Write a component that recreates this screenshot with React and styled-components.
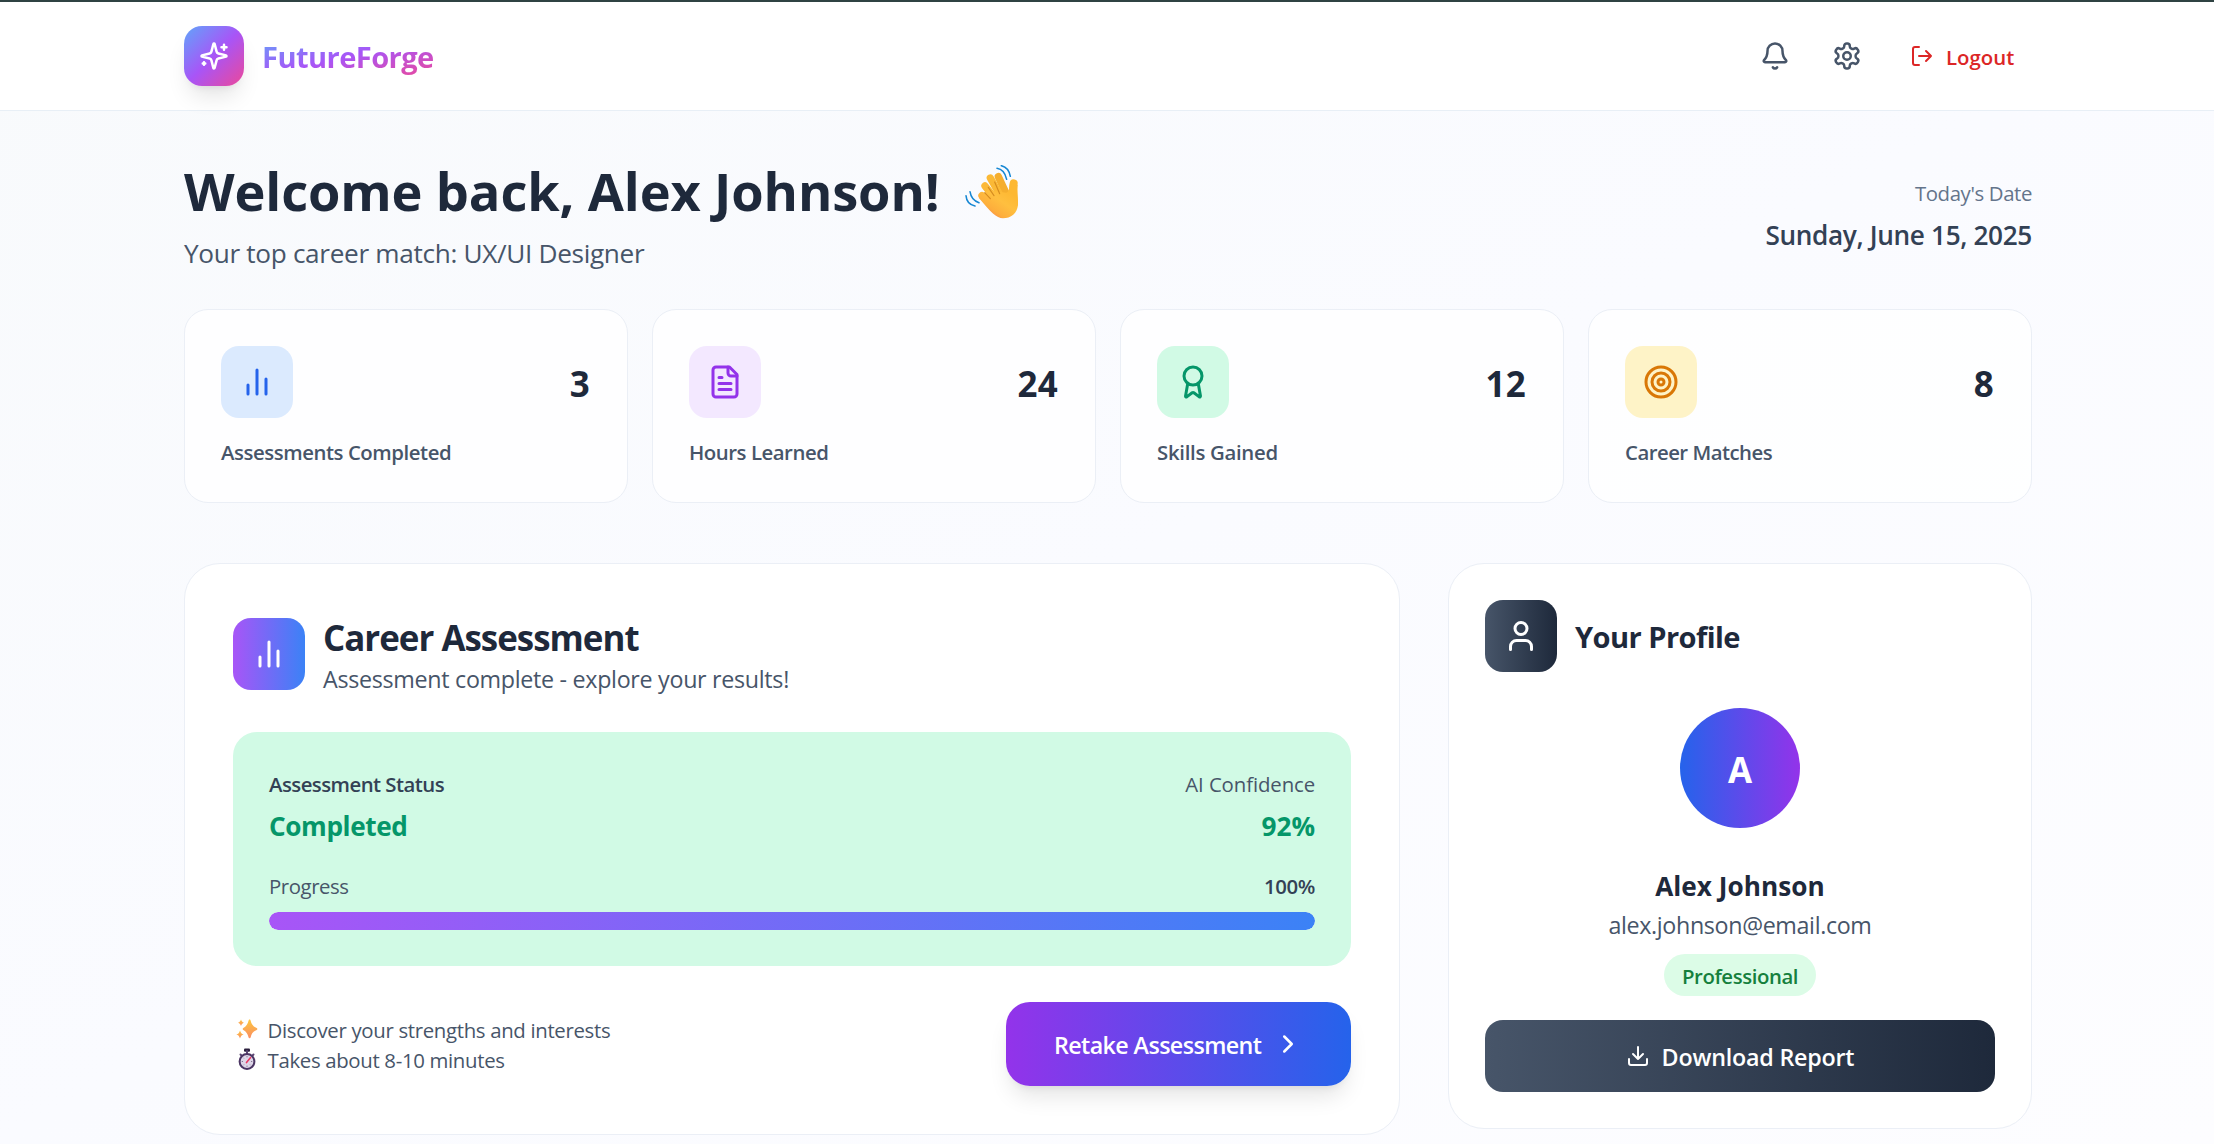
import React from "react";
import styled, { createGlobalStyle, css } from "styled-components";
import { Bell, Award, Target, ChevronRight } from "lucide-react";

const GlobalStyle = createGlobalStyle`
  *, *::before, *::after { box-sizing: border-box; }
  html, body { margin: 0; padding: 0; overflow: hidden; }
  body {
    font-family: "Open Sans", "Noto Sans", sans-serif;
    color: #1e293b;
  }
  h1, h2, h3, p { margin: 0; }
  button { font-family: inherit; border: 0; background: none; cursor: pointer; }
  svg { display: block; flex: none; }
`;

/* Type scale: font size, line box and a small optical drop within the line. */
const type = (size, line, drop = 2) => css`
  font-size: ${size * 0.97}px;
  line-height: ${line - drop}px;
  padding-top: ${drop}px;
  letter-spacing: ${(p) => p.$track || 0}px;
  white-space: nowrap;
`;

const Page = styled.div`
  height: 1144px;
  overflow: hidden;
  border-top: 2px solid #2f4343;
  background: linear-gradient(to bottom right, #f8fafc, #fafbff 50%, #fdfdff);
`;

const Header = styled.header`
  height: 109px;
  background: rgba(255, 255, 255, 0.92);
  border-bottom: 1px solid #e8eff6;
`;

const HeaderInner = styled.div`
  width: 1848px;
  height: 108px;
  margin-left: 184px;
  display: flex;
  align-items: center;
  justify-content: space-between;
`;

const Brand = styled.div`
  display: flex;
  align-items: center;
  gap: 18px;
`;

const LogoTile = styled.div`
  width: 60px;
  height: 60px;
  border-radius: 18px;
  display: grid;
  place-items: center;
  color: #fff;
  background: linear-gradient(to bottom right, #60a5fa, #a855f7, #ec4899);
  box-shadow: 0 15px 22.5px -4.5px rgba(0, 0, 0, 0.1), 0 6px 9px -6px rgba(0, 0, 0, 0.1);
`;

const BrandName = styled.span`
  ${type(30, 42, 3)}
  font-weight: 700;
  color: transparent;
  background: linear-gradient(to bottom right, #60a5fa, #a855f7, #ec4899);
  background-clip: text;
  -webkit-background-clip: text;
`;

const HeaderActions = styled.div`
  display: flex;
  align-items: center;
  gap: 18px;
`;

const IconButton = styled.button`
  padding: 12px;
  color: #475569;
`;

const LogoutButton = styled.button`
  display: flex;
  align-items: center;
  gap: 12px;
  width: 140px;
  padding: 12px 18px;
  color: #dc2626;
`;

const LogoutLabel = styled.span`
  ${type(21, 30)}
  font-weight: 570;
`;

const Main = styled.main`
  width: 1848px;
  margin-left: 184px;
  padding-top: 48px;
`;

const Hero = styled.section`
  display: flex;
  align-items: center;
  justify-content: space-between;
  margin-bottom: 36px;
`;

const Greeting = styled.div`
  display: flex;
  flex-direction: column;
  gap: 12px;
`;

const HeroTitle = styled.h1`
  ${type(54, 60, 4)}
  font-weight: 700;
  display: flex;
  gap: 25px;
`;

const WaveSlot = styled.span`
  width: 54px;
  height: 54px;
  margin-top: 2px;
`;

const HeroSubtitle = styled.p`
  ${type(27, 42)}
  color: #475569;
`;

const DateBlock = styled.div`
  display: flex;
  flex-direction: column;
  align-items: flex-end;
  gap: 6px;
`;

const DateCaption = styled.p`
  ${type(21, 30)}
  color: #64748b;
`;

const DateValue = styled.p`
  ${type(27, 42)}
  font-weight: 600;
  color: #334155;
`;

const StatGrid = styled.section`
  display: grid;
  grid-template-columns: repeat(4, 1fr);
  gap: 24px;
  margin-bottom: 60px;
`;

const surface = css`
  background: rgba(255, 255, 255, 0.8);
  border: 1px solid #ebeff6;
`;

const StatCard = styled.article`
  ${surface}
  height: 194px;
  border-radius: 24px;
  padding: 36px;
`;

const StatTop = styled.div`
  display: flex;
  align-items: center;
  justify-content: space-between;
  margin-bottom: 18px;
`;

const IconTile = styled.div`
  width: 72px;
  height: 72px;
  border-radius: 18px;
  display: grid;
  place-items: center;
  flex: none;
  color: ${(p) => p.$ink};
  background: ${(p) => p.$fill};
`;

const StatValue = styled.span`
  ${type(36, 48, 4)}
  font-weight: 700;
  margin-right: 1px;
`;

const StatLabel = styled.p`
  ${type(21, 30, 3)}
  font-weight: 560;
  color: #475569;
`;

const Columns = styled.section`
  display: grid;
  grid-template-columns: 1216px 584px;
  gap: 48px;
  align-items: start;
`;

const Panel = styled.article`
  ${surface}
  background: rgba(255, 255, 255, 0.92);
  border-radius: 36px;
  padding: ${(p) => p.$pad}px;
`;

const PanelHead = styled.header`
  display: flex;
  align-items: center;
  gap: 18px;
  margin-bottom: 36px;
`;

const PanelTitle = styled.h2`
  ${type(36, 48, 4)}
  font-weight: 700;
`;

const PanelSubtitle = styled.p`
  ${type(24, 36)}
  color: #475569;
`;

const ProfileTitle = styled.h3`
  ${type(30, 42, 3)}
  font-weight: 700;
`;

const StatusBox = styled.div`
  display: flex;
  flex-direction: column;
  height: 234px;
  padding: 36px;
  border-radius: 24px;
  background: #d1fae5;
  margin-bottom: 36px;
`;

const Split = styled.div`
  display: flex;
  justify-content: space-between;
  margin-bottom: ${(p) => p.$gap}px;
`;

const SmallText = styled.span`
  ${type(21, 30)}
  font-weight: ${(p) => (p.$strong ? 550 : 400)};
  color: ${(p) => (p.$strong ? "#334155" : "#475569")};
`;

const StatusValue = styled.span`
  ${type(27, 42)}
  font-weight: 700;
  color: #059669;
`;

const Track = styled.div`
  height: 18px;
  border-radius: 9px;
  background: #e2e8f0;
  overflow: hidden;
`;

const Bar = styled.div`
  height: 100%;
  border-radius: 9px;
  background: linear-gradient(to right, #a855f7, #3b82f6);
`;

const PanelFoot = styled.footer`
  display: flex;
  align-items: center;
  justify-content: space-between;
`;

const Hints = styled.div`
  display: flex;
  flex-direction: column;
`;

const Hint = styled.div`
  display: grid;
  grid-template-columns: 34.5px auto;
  align-items: center;
`;

const HintIcon = styled.span`
  padding-left: 3px;
`;

const PrimaryButton = styled.button`
  display: flex;
  align-items: center;
  gap: 12px;
  width: 345px;
  height: 84px;
  padding: 0 48px;
  justify-content: space-between;
  border-radius: 24px;
  color: #fff;
  background: linear-gradient(to right, #9333ea, #2563eb);
  box-shadow: 0 15px 22.5px -4.5px rgba(0, 0, 0, 0.1), 0 6px 9px -6px rgba(0, 0, 0, 0.1);
`;

const ButtonLabel = styled.span`
  ${type(24, 36)}
  font-weight: 600;
`;

const ProfileBody = styled.div`
  display: flex;
  flex-direction: column;
  align-items: center;
`;

const Avatar = styled.div`
  width: 120px;
  height: 120px;
  border-radius: 50%;
  display: grid;
  place-items: center;
  color: #fff;
  background: linear-gradient(to right, #2563eb, #9333ea);
  margin-bottom: 36px;
`;

const AvatarLetter = styled.span`
  ${type(36, 48, 3)}
  font-weight: 700;
`;

const ProfileName = styled.p`
  ${type(27, 42)}
  font-weight: 700;
`;

const ProfileEmail = styled.p`
  ${type(24, 36)}
  color: #475569;
`;

const Badge = styled.span`
  padding: 6px 18px;
  margin: 12px 0 24px;
  border-radius: 21px;
  background: #dcfce7;
  color: #15803d;
`;

const BadgeLabel = styled.span`
  ${type(21, 30)}
  display: block;
  font-weight: 560;
`;

const DownloadButton = styled.button`
  width: 100%;
  height: 72px;
  border-radius: 18px;
  display: flex;
  align-items: center;
  justify-content: center;
  gap: 12px;
  color: #fff;
  background: linear-gradient(to right, #475569, #1e293b);
`;

const Glyph = ({ size, children }) => (
  <svg width={size} height={size} viewBox="0 0 24 24" fill="none" stroke="currentColor"
    strokeWidth="2" strokeLinecap="round" strokeLinejoin="round">
    {children}
  </svg>
);

const SparklesGlyph = ({ size }) => (
  <Glyph size={size}>
    <path d="M9.937 15.5A2 2 0 0 0 8.5 14.063l-6.135-1.582a.5.5 0 0 1 0-.962L8.5 9.936A2 2 0 0 0 9.937 8.5l1.582-6.135a.5.5 0 0 1 .963 0L14.063 8.5A2 2 0 0 0 15.5 9.937l6.135 1.581a.5.5 0 0 1 0 .964L15.5 14.063a2 2 0 0 0-1.437 1.437l-1.582 6.135a.5.5 0 0 1-.963 0z" />
    <path d="M20 3v4M22 5h-4M4 17v2M5 18H3" />
  </Glyph>
);

const GearGlyph = ({ size }) => (
  <Glyph size={size}>
    <path d="M12.22 2h-.44a2 2 0 0 0-2 2v.18a2 2 0 0 1-1 1.73l-.43.25a2 2 0 0 1-2 0l-.15-.08a2 2 0 0 0-2.73.73l-.22.38a2 2 0 0 0 .73 2.73l.15.1a2 2 0 0 1 1 1.72v.51a2 2 0 0 1-1 1.74l-.15.09a2 2 0 0 0-.73 2.73l.22.38a2 2 0 0 0 2.73.73l.15-.08a2 2 0 0 1 2 0l.43.25a2 2 0 0 1 1 1.73V20a2 2 0 0 0 2 2h.44a2 2 0 0 0 2-2v-.18a2 2 0 0 1 1-1.73l.43-.25a2 2 0 0 1 2 0l.15.08a2 2 0 0 0 2.73-.73l.22-.39a2 2 0 0 0-.73-2.73l-.15-.08a2 2 0 0 1-1-1.74v-.5a2 2 0 0 1 1-1.74l.15-.09a2 2 0 0 0 .73-2.73l-.22-.38a2 2 0 0 0-2.73-.73l-.15.08a2 2 0 0 1-2 0l-.43-.25a2 2 0 0 1-1-1.73V4a2 2 0 0 0-2-2z" />
    <circle cx="12" cy="12" r="3" />
  </Glyph>
);

const LogoutGlyph = ({ size }) => (
  <Glyph size={size}>
    <path d="M9 21H5a2 2 0 0 1-2-2V5a2 2 0 0 1 2-2h4" />
    <path d="m16 17 5-5-5-5M21 12H9" />
  </Glyph>
);

const BarsGlyph = ({ size }) => (
  <Glyph size={size}>
    <path d="M18 20V10M12 20V4M6 20v-6" />
  </Glyph>
);

const FileGlyph = ({ size }) => (
  <Glyph size={size}>
    <path d="M15 2H6a2 2 0 0 0-2 2v16a2 2 0 0 0 2 2h12a2 2 0 0 0 2-2V7Z" />
    <path d="M14 2v4a2 2 0 0 0 2 2h4M10 9H8M16 13H8M16 17H8" />
  </Glyph>
);

const UserGlyph = ({ size }) => (
  <Glyph size={size}>
    <path d="M19 21v-2a4 4 0 0 0-4-4H9a4 4 0 0 0-4 4v2" />
    <circle cx="12" cy="7" r="4" />
  </Glyph>
);

const DownloadGlyph = ({ size }) => (
  <Glyph size={size}>
    <path d="M21 15v4a2 2 0 0 1-2 2H5a2 2 0 0 1-2-2v-4M7 10l5 5 5-5M12 15V3" />
  </Glyph>
);

const WavingHand = () => (
  <svg width="54" height="54" viewBox="72 45 162 162" fill="none" strokeLinecap="round">
    <defs>
      <linearGradient id="skin" gradientUnits="userSpaceOnUse" x1="142" y1="195" x2="196" y2="118">
        <stop offset="0" stopColor="#f98a4e" />
        <stop offset="0.22" stopColor="#fdae3c" />
        <stop offset="0.6" stopColor="#ffbf3f" />
        <stop offset="1" stopColor="#fdb832" />
      </linearGradient>
    </defs>
    <g stroke="url(#skin)" strokeWidth="22">
      <path d="M172 80 201 142" stroke="#f5ae2e" />
      <path d="M148 84 182 144" stroke="#fbb936" />
      <path d="M132 108 168 154" stroke="#fcb938" />
      <path d="M123 137 168 182" />
      <path d="M218 100C214 116 217 135 219 160" strokeWidth="24" />
    </g>
    <path d="M114 144 140 120 160 124 196 128C204 128 205 112 207 100L230 104C228 122 231 142 231 162 230 190 209 205 186 205 166 204 150 188 114 144Z" fill="url(#skin)" />
    <g stroke="#c97c16" strokeWidth="3.5" opacity="0.75">
      <path d="M161 96 176 131" />
      <path d="M142 112 159 137" />
      <path d="M131 128 148 146" />
    </g>
    <g stroke="#1687d3" strokeWidth="4.6">
      <path d="M168 55Q190 58 197 88" />
      <path d="M181 47Q203 52 208 79" />
      <path d="M87 125Q91 151 114 158" />
      <path d="M75 137Q77 163 102 168" />
    </g>
  </svg>
);

const SparkEmoji = () => (
  <svg width="23" height="22" viewBox="0 0 23 22">
    <defs>
      <linearGradient id="spark" x1="0" y1="0" x2="0" y2="1">
        <stop offset="0" stopColor="#fcc73f" />
        <stop offset="1" stopColor="#fb8d62" />
      </linearGradient>
    </defs>
    <g fill="url(#spark)">
      <path d="M13.6 1.5c.6 0 .8.5 1 1 .9 3.8 2.400 6 6.100 7.500.9.400.9 1.600 0 2-3.700 1.500-5.200 3.700-6.100 7.500-.2.900-1.800.900-2 0-.9-3.800-2.400-6-5.300-7.500-.8-.4-.8-1.600 0-2 2.900-1.500 4.400-3.700 5.300-7.500.2-.5.400-1 1-1Z" />
      <path d="M5 1.500c.7 2 1.200 2.500 3 3.200-1.800.7-2.300 1.300-3 3.300-.7-2-1.200-2.600-3-3.300 1.800-.7 2.300-1.200 3-3.200Z" />
      <path d="M4 12.500c.8 2.500 1.500 3.200 3.700 4-2.200.8-2.900 1.500-3.700 4-.8-2.500-1.500-3.200-3.700-4 2.200-.8 2.900-1.500 3.700-4Z" />
    </g>
  </svg>
);

const StopwatchEmoji = () => (
  <svg width="22" height="23" viewBox="0 0 22 23">
    <rect x="8" y="0.500" width="6" height="3.200" rx="1" fill="#2b1f3d" />
    <path d="M11 3v3M4.500 6.500l1.200 1.200M17.500 6.500l-1.200 1.200" stroke="#5b4673" strokeWidth="2" strokeLinecap="round" />
    <circle cx="11" cy="13.500" r="7.400" fill="#ded6e8" stroke="#4b3563" strokeWidth="2" />
    <path d="M11 8.300v1M11 17.700v1M5.800 13.500h1M15.200 13.500h1M7.300 9.800l.5.500M7.300 17.200l.5-.5M14.700 17.200l-.5-.5" stroke="#6f6080" strokeWidth="1" />
    <path d="M10.500 14.600 14.600 9.600" stroke="#ea3a62" strokeWidth="1.600" strokeLinecap="round" />
  </svg>
);

const stats = [
  { label: "Assessments Completed", value: "3", track: -0.44, icon: <BarsGlyph size={36} />, ink: "#2563eb", fill: "#dbeafe" },
  { label: "Hours Learned", value: "24", track: -0.46, icon: <FileGlyph size={36} />, ink: "#9333ea", fill: "#f3e8ff" },
  { label: "Skills Gained", value: "12", track: -0.3, icon: <Award size={36} />, ink: "#059669", fill: "#d1fae5" },
  { label: "Career Matches", value: "8", track: -0.52, icon: <Target size={36} />, ink: "#d97706", fill: "#fef3c7" },
];

const progress = 100;

export default function App() {
  return (
    <Page>
      <GlobalStyle />
      <Header>
        <HeaderInner>
          <Brand>
            <LogoTile><SparklesGlyph size={30} /></LogoTile>
            <BrandName $track={-0.58}>FutureForge</BrandName>
          </Brand>
          <HeaderActions>
            <IconButton aria-label="Notifications"><Bell size={30} /></IconButton>
            <IconButton aria-label="Settings"><GearGlyph size={30} /></IconButton>
            <LogoutButton>
              <LogoutGlyph size={24} />
              <LogoutLabel $track={0}>Logout</LogoutLabel>
            </LogoutButton>
          </HeaderActions>
        </HeaderInner>
      </Header>

      <Main>
        <Hero>
          <Greeting>
            <HeroTitle $track={-0.13}>
              <span>Welcome back, Alex Johnson!</span>
              <WaveSlot role="img" aria-label="Waving hand"><WavingHand /></WaveSlot>
            </HeroTitle>
            <HeroSubtitle $track={-0.33}>Your top career match: UX/UI Designer</HeroSubtitle>
          </Greeting>
          <DateBlock>
            <DateCaption $track={-0.38}>Today's Date</DateCaption>
            <DateValue $track={-0.35}>Sunday, June 15, 2025</DateValue>
          </DateBlock>
        </Hero>

        <StatGrid>
          {stats.map((s) => (
            <StatCard key={s.label}>
              <StatTop>
                <IconTile $ink={s.ink} $fill={s.fill}>{s.icon}</IconTile>
                <StatValue $track={0.3}>{s.value}</StatValue>
              </StatTop>
              <StatLabel $track={s.track}>{s.label}</StatLabel>
            </StatCard>
          ))}
        </StatGrid>

        <Columns>
          <Panel $pad={48}>
            <PanelHead>
              <IconTile $ink="#ffffff" $fill="linear-gradient(to right, #a855f7, #3b82f6)">
                <BarsGlyph size={36} />
              </IconTile>
              <div>
                <PanelTitle $track={-0.99}>Career Assessment</PanelTitle>
                <PanelSubtitle $track={-0.3}>Assessment complete - explore your results!</PanelSubtitle>
              </div>
            </PanelHead>
            <StatusBox>
              <Split $gap={6}>
                <SmallText $strong $track={-0.54}>Assessment Status</SmallText>
                <SmallText $track={-0.1}>AI Confidence</SmallText>
              </Split>
              <Split $gap={24}>
                <StatusValue $track={-0.4}>Completed</StatusValue>
                <StatusValue>92%</StatusValue>
              </Split>
              <Split $gap={12}>
                <SmallText $track={-0.43}>Progress</SmallText>
                <SmallText $strong $track={-0.4}>100%</SmallText>
              </Split>
              <Track><Bar style={{ width: `${progress}%` }} /></Track>
            </StatusBox>
            <PanelFoot>
              <Hints>
                <Hint>
                  <HintIcon><SparkEmoji /></HintIcon>
                  <SmallText $track={-0.32}>Discover your strengths and interests</SmallText>
                </Hint>
                <Hint>
                  <HintIcon><StopwatchEmoji /></HintIcon>
                  <SmallText $track={-0.32}>Takes about 8-10 minutes</SmallText>
                </Hint>
              </Hints>
              <PrimaryButton>
                <ButtonLabel $track={-0.59}>Retake Assessment</ButtonLabel>
                <ChevronRight size={30} />
              </PrimaryButton>
            </PanelFoot>
          </Panel>

          <Panel $pad={36}>
            <PanelHead>
              <IconTile $ink="#ffffff" $fill="linear-gradient(to right, #475569, #1e293b)">
                <UserGlyph size={36} />
              </IconTile>
              <ProfileTitle $track={-0.57}>Your Profile</ProfileTitle>
            </PanelHead>
            <ProfileBody>
              <Avatar><AvatarLetter>A</AvatarLetter></Avatar>
              <ProfileName $track={0.03}>Alex Johnson</ProfileName>
              <ProfileEmail $track={-0.35}>alex.johnson@email.com</ProfileEmail>
              <Badge><BadgeLabel $track={-0.42}>Professional</BadgeLabel></Badge>
              <DownloadButton>
                <DownloadGlyph size={24} />
                <ButtonLabel $track={-0.21}>Download Report</ButtonLabel>
              </DownloadButton>
            </ProfileBody>
          </Panel>
        </Columns>
      </Main>
    </Page>
  );
}
